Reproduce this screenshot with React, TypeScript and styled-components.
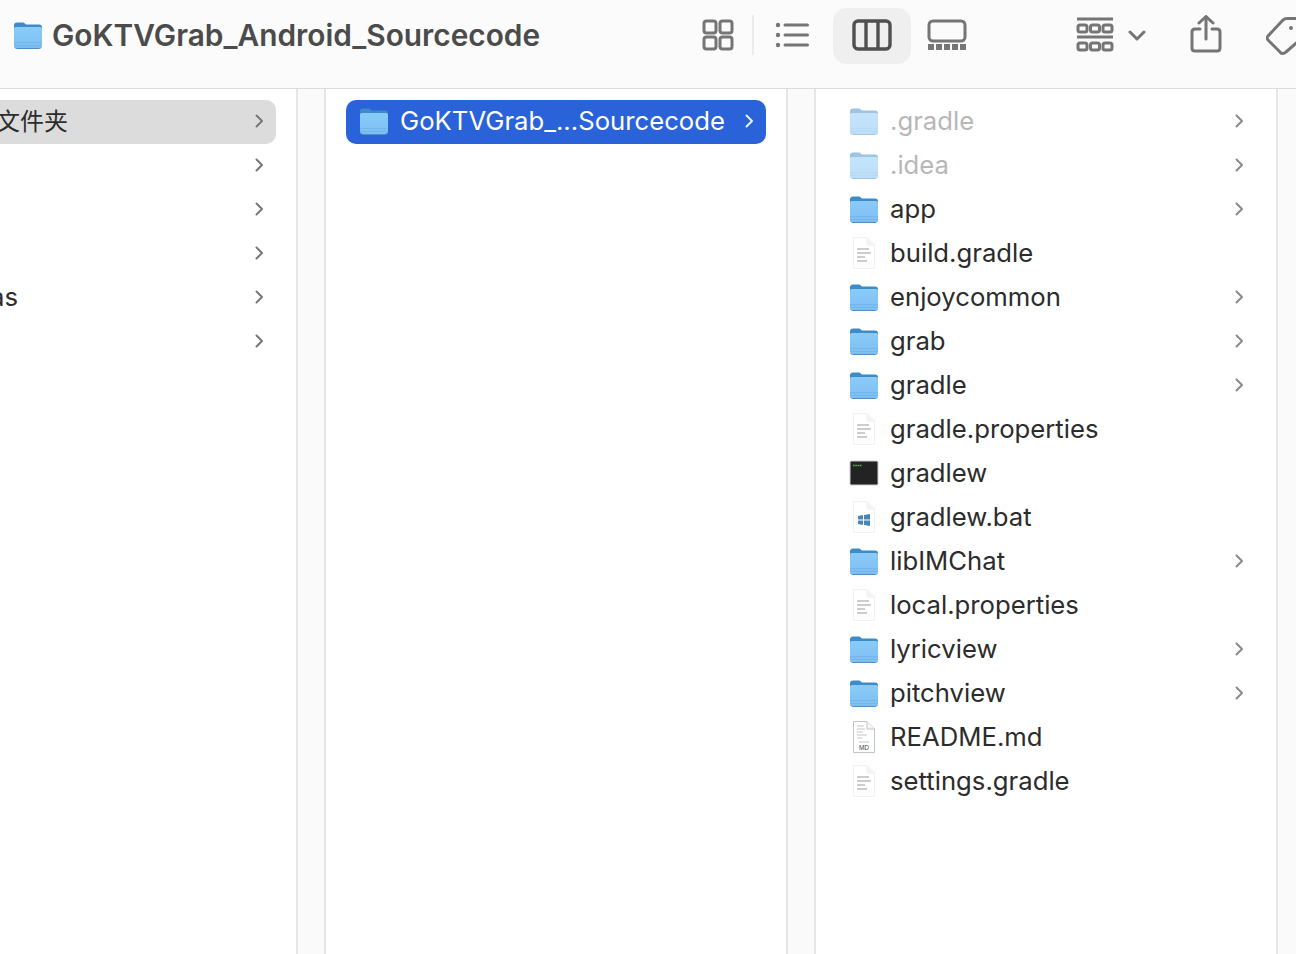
import React, { useId } from "react";
import styled, { createGlobalStyle } from "styled-components";

const Global = createGlobalStyle`
  html, body { margin: 0; padding: 0; height: 100%; overflow: hidden; background: #fff; }
  #root { height: 954px; overflow: hidden; }
  * { box-sizing: border-box; }
`;

const Window = styled.div`
  width: 1296px;
  height: 954px;
  display: flex;
  flex-direction: column;
  overflow: hidden;
  font-family: Inter, "Noto Sans CJK SC", "Liberation Sans", sans-serif;
`;

const Toolbar = styled.header`
  flex: 0 0 89px;
  height: 89px;
  display: flex;
  align-items: center;
  padding: 0 0 18px 13px;
  background: #fbfbfb;
  border-bottom: 1px solid #dcdcdc;
  overflow: hidden;
`;

const Title = styled.h1`
  margin: 0 0 0 9px;
  flex: 0 0 640px;
  font-size: 29.85px;
  font-weight: 600;
  color: #4b4b4b;
  white-space: nowrap;
`;

const ToolIcon = styled.svg<{ $left: number; $lift?: number }>`
  flex: none;
  display: block;
  margin-left: ${(p) => p.$left}px;
  margin-bottom: ${(p) => p.$lift ?? 0}px;
  fill: none;
  stroke: #757575;
  stroke-width: 3;
`;

const Divider = styled.span`
  flex: none;
  width: 2px;
  height: 40px;
  margin-left: 18px;
  background: #ececec;
`;

const ActivePill = styled.div`
  flex: none;
  width: 78px;
  height: 56px;
  margin-left: 24px;
  margin-top: 2px;
  border-radius: 14px;
  background: #efefef;
  display: flex;
  align-items: center;
  justify-content: center;
`;

const ColumnsGlyph = styled.svg`
  display: block;
  margin-bottom: 2px;
  fill: none;
  stroke: #505050;
  stroke-width: 3.4;
`;

const Browser = styled.main`
  flex: 1;
  display: flex;
  min-height: 0;
  background: #fff;
`;

const Column = styled.section<{ $width: number }>`
  flex: 0 0 ${(p) => p.$width}px;
  padding: 11px 20px 0;
  border-right: 2px solid #e6e6e6;
  background: #fff;
  overflow: hidden;
`;

const Gutter = styled.div<{ $last?: boolean }>`
  flex: ${(p) => (p.$last ? "1" : "0 0 28px")};
  background: #fafafa;
  border-right: ${(p) => (p.$last ? "0" : "2px solid #e6e6e6")};
`;

const Row = styled.div<{ $state?: "blue" | "grey" }>`
  height: 44px;
  display: flex;
  align-items: center;
  border-radius: 10px;
  background: ${(p) =>
    p.$state === "blue" ? "#2a62d9" : p.$state === "grey" ? "#dcdcdc" : "transparent"};
`;

const IconSlot = styled.span`
  flex: 0 0 54px;
  height: 44px;
  display: flex;
  align-items: center;
  padding: 0 0 2px 13px;
`;

const Label = styled.span<{ $tone?: "dim" | "white" }>`
  flex: 1;
  min-width: 0;
  padding-bottom: 3px;
  font-size: 25.7px;
  white-space: nowrap;
  color: ${(p) => (p.$tone === "dim" ? "#b7b7b7" : p.$tone === "white" ? "#ffffff" : "#2c2c2c")};
`;

const ClippedLabel = styled.span<{ $offset: number; $size: number; $lift: number }>`
  flex: 1;
  min-width: 0;
  margin-left: ${(p) => p.$offset}px;
  padding-bottom: ${(p) => p.$lift}px;
  font-size: ${(p) => p.$size}px;
  white-space: nowrap;
  color: #2c2c2c;
`;

const SidebarRows = styled.div`
  margin-left: -40px;
`;

const Chevron = styled.svg<{ $light?: boolean; $dark?: boolean }>`
  flex: none;
  display: block;
  margin: 0 12px 2px 0;
  fill: none;
  stroke: ${(p) => (p.$light ? "#e8efff" : p.$dark ? "#777777" : "#8a8a8a")};
  stroke-width: 2;
  stroke-linecap: round;
  stroke-linejoin: round;
`;

const FolderGlyph = styled.svg<{ $dim?: boolean }>`
  flex: none;
  display: block;
  opacity: ${(p) => (p.$dim ? 0.5 : 1)};
`;

const DocGlyph = styled.svg`
  flex: none;
  display: block;
`;

function Arrow(props: { light?: boolean; dark?: boolean }) {
  return (
    <Chevron $light={props.light} $dark={props.dark} width="10" height="16" viewBox="0 0 10 16">
      <path d="M2.5 2.5 L8 8 L2.5 13.5" />
    </Chevron>
  );
}

function Folder({ dim }: { dim?: boolean }) {
  const id = useId();
  return (
    <FolderGlyph $dim={dim} width="30" height="28" viewBox="0 0 30 28">
      <defs>
        <linearGradient id={id} x1="0" y1="0" x2="0" y2="1">
          <stop offset="0" stopColor="#8accf8" />
          <stop offset="1" stopColor="#7bbff2" />
        </linearGradient>
      </defs>
      <path d="M1 4.5 C1 2.5 2 1.5 4 1.5 H10 C11.5 1.5 12 3.5 13.5 3.5 H26 C28 3.5 29 4.5 29 6.5 V12 H1 Z" fill="#3f8ac9" />
      <path d="M1 8 C1 6.8 1.8 6 3 6 H27 C28.2 6 29 6.8 29 8 V24.5 C29 26 28 27 26.5 27 H3.5 C2 27 1 26 1 24.5 Z" fill={`url(#${id})`} />
      <rect x="1" y="21" width="28" height="1" fill="#6fb0e4" opacity="0.7" />
      <rect x="1" y="24" width="28" height="1" fill="#6fb0e4" opacity="0.6" />
      <path d="M1.5 26 C2 27 3 27.5 4 27.5 H26 C27 27.5 28 27 28.5 26" fill="none" stroke="#4f8fc8" strokeWidth="1" />
    </FolderGlyph>
  );
}

function DocShape({ children, stroke = "#e4e4e4" }: { children?: React.ReactNode; stroke?: string }) {
  return (
    <DocGlyph width="30" height="34" viewBox="0 0 30 34">
      <path d="M4.5 1.5 H18 L25.5 9 V32.5 H4.5 Z" fill="#ffffff" stroke={stroke} strokeWidth="1" />
      <path d="M18 1.5 V9 H25.5" fill="#f4f4f4" stroke={stroke} strokeWidth="1" />
      {children}
    </DocGlyph>
  );
}

function TextDoc() {
  return (
    <DocShape stroke="#f2f2f2">
      <g stroke="#bdbdbd" strokeWidth="1.5">
        <line x1="8" y1="13" x2="20" y2="13" />
        <line x1="8" y1="17" x2="22" y2="17" />
        <line x1="8" y1="21" x2="16" y2="21" />
        <line x1="8" y1="25" x2="18" y2="25" />
      </g>
    </DocShape>
  );
}

function WindowsDoc() {
  return (
    <DocShape stroke="#f2f2f2">
      <path transform="translate(0 -1.5)" d="M9 17.5 L14 16.6 V21 H9 Z M15 16.4 L21 15.4 V21 H15 Z M9 22 H14 V26.4 L9 25.5 Z M15 22 H21 V27.6 L15 26.6 Z" fill="#4a86b4" />
    </DocShape>
  );
}

function MdDoc() {
  return (
    <DocShape stroke="#c4c4c4">
      <g stroke="#c4c4c4" strokeWidth="1">
        <line x1="8" y1="6" x2="15" y2="6" />
        <line x1="8" y1="9" x2="16" y2="9" />
        <line x1="8" y1="12" x2="14" y2="12" />
        <line x1="8" y1="15" x2="18" y2="15" />
        <line x1="8" y1="18" x2="13" y2="18" />
        <line x1="10" y1="22" x2="20" y2="22" />
      </g>
      <text x="15" y="30" textAnchor="middle" fontSize="6.5" fontFamily="Liberation Sans, sans-serif" fill="#444">MD</text>
    </DocShape>
  );
}

function Terminal() {
  return (
    <DocGlyph width="30" height="26" viewBox="0 0 30 26">
      <rect x="1" y="1" width="28" height="24" rx="1.5" fill="#232323" stroke="#cfcfcf" strokeWidth="1" />
      <path d="M4 5.5 H13" stroke="#5fb064" strokeWidth="1.6" strokeDasharray="1.6 0.7" />
    </DocGlyph>
  );
}

type Kind = "folder" | "dim" | "text" | "term" | "win" | "md";
const files: { name: string; kind: Kind }[] = [
  { name: ".gradle", kind: "dim" },
  { name: ".idea", kind: "dim" },
  { name: "app", kind: "folder" },
  { name: "build.gradle", kind: "text" },
  { name: "enjoycommon", kind: "folder" },
  { name: "grab", kind: "folder" },
  { name: "gradle", kind: "folder" },
  { name: "gradle.properties", kind: "text" },
  { name: "gradlew", kind: "term" },
  { name: "gradlew.bat", kind: "win" },
  { name: "libIMChat", kind: "folder" },
  { name: "local.properties", kind: "text" },
  { name: "lyricview", kind: "folder" },
  { name: "pitchview", kind: "folder" },
  { name: "README.md", kind: "md" },
  { name: "settings.gradle", kind: "text" },
];

function FileIcon({ kind }: { kind: Kind }) {
  if (kind === "folder") return <Folder />;
  if (kind === "dim") return <Folder dim />;
  if (kind === "term") return <Terminal />;
  if (kind === "win") return <WindowsDoc />;
  if (kind === "md") return <MdDoc />;
  return <TextDoc />;
}

export default function App() {
  return (
    <Window>
      <Global />
      <Toolbar>
        <Folder />
        <Title>GoKTVGrab_Android_Sourcecode</Title>
        <ToolIcon $left={10} width="32" height="32" viewBox="0 0 32 32" strokeWidth="2.6">
          <rect x="2" y="2" width="12" height="12" rx="2.5" />
          <rect x="18" y="2" width="12" height="12" rx="2.5" />
          <rect x="2" y="18" width="12" height="12" rx="2.5" />
          <rect x="18" y="18" width="12" height="12" rx="2.5" />
        </ToolIcon>
        <Divider />
        <ToolIcon $left={21} width="34" height="26" viewBox="0 0 34 26">
          <circle cx="3" cy="3" r="2.2" fill="#757575" stroke="none" />
          <circle cx="3" cy="13" r="2.2" fill="#757575" stroke="none" />
          <circle cx="3" cy="23" r="2.2" fill="#757575" stroke="none" />
          <line x1="10" y1="3" x2="32.5" y2="3" strokeLinecap="round" />
          <line x1="10" y1="13" x2="32.5" y2="13" strokeLinecap="round" />
          <line x1="10" y1="23" x2="32.5" y2="23" strokeLinecap="round" />
        </ToolIcon>
        <ActivePill>
          <ColumnsGlyph width="40" height="32" viewBox="0 0 40 32">
            <rect x="2" y="2" width="36" height="28" rx="4" />
            <line x1="14" y1="2" x2="14" y2="30" />
            <line x1="26" y1="2" x2="26" y2="30" />
          </ColumnsGlyph>
        </ActivePill>
        <ToolIcon $left={16} width="40" height="32" viewBox="0 0 40 32">
          <rect x="2" y="2" width="36" height="20" rx="4" />
          <g fill="#757575" stroke="none">
            <rect x="1" y="25" width="6" height="6" />
            <rect x="9" y="25" width="6" height="6" />
            <rect x="17" y="25" width="6" height="6" />
            <rect x="25" y="25" width="6" height="6" />
            <rect x="33" y="25" width="6" height="6" />
          </g>
        </ToolIcon>
        <ToolIcon $left={109} $lift={1} width="38" height="36" viewBox="0 0 38 36">
          <line x1="1" y1="2" x2="37" y2="2" />
          <rect x="2" y="8" width="9" height="7" rx="2" />
          <rect x="14.5" y="8" width="9" height="7" rx="2" />
          <rect x="27" y="8" width="9" height="7" rx="2" />
          <line x1="1" y1="20" x2="37" y2="20" />
          <rect x="2" y="26" width="9" height="7" rx="2" />
          <rect x="14.5" y="26" width="9" height="7" rx="2" />
          <rect x="27" y="26" width="9" height="7" rx="2" />
        </ToolIcon>
        <ToolIcon $left={14} $lift={-2} width="18" height="12" viewBox="0 0 18 12" strokeLinecap="round" strokeLinejoin="round" strokeWidth="3.2">
          <path d="M2 2 L9 9 L16 2" />
        </ToolIcon>
        <ToolIcon $left={44} $lift={3} width="32" height="38" viewBox="0 0 32 38" strokeLinejoin="round" strokeLinecap="round" strokeWidth="2.8">
          <path d="M10 14 H5 C3 14 2 15 2 17 V33 C2 35 3 36 5 36 H27 C29 36 30 35 30 33 V17 C30 15 29 14 27 14 H22" />
          <line x1="16" y1="2" x2="16" y2="24" />
          <path d="M9 8 L16 1.5 L23 8" />
        </ToolIcon>
        <ToolIcon $left={44} $lift={-2} width="40" height="40" viewBox="0 0 40 40" strokeLinejoin="round" strokeWidth="2.8">
          <path d="M2 20 L17 4 C18 3 19 2.5 21 2.5 H34 C37 2.5 38 4 38 6 V18 C38 20 37 21 36 22 L20 36 C18 38 15 38 14 36 L2 24 C1 23 1 21 2 20 Z" />
          <circle cx="25" cy="12" r="2" fill="#757575" stroke="none" />
        </ToolIcon>
      </Toolbar>
      <Browser>
        <Column $width={298}>
          <SidebarRows>
            <Row $state="grey">
              <ClippedLabel $offset={16} $size={24} $lift={6}>文件夹</ClippedLabel>
              <Arrow dark />
            </Row>
            <Row><ClippedLabel $offset={0} $size={25.7} $lift={3} /><Arrow dark /></Row>
            <Row><ClippedLabel $offset={0} $size={25.7} $lift={3} /><Arrow dark /></Row>
            <Row><ClippedLabel $offset={0} $size={25.7} $lift={3} /><Arrow dark /></Row>
            <Row><ClippedLabel $offset={10} $size={25.7} $lift={3}>as</ClippedLabel><Arrow dark /></Row>
            <Row><ClippedLabel $offset={0} $size={25.7} $lift={3} /><Arrow dark /></Row>
          </SidebarRows>
        </Column>
        <Gutter />
        <Column $width={462}>
          <Row $state="blue">
            <IconSlot><Folder /></IconSlot>
            <Label $tone="white">GoKTVGrab_...Sourcecode</Label>
            <Arrow light />
          </Row>
        </Column>
        <Gutter />
        <Column $width={462}>
          {files.map((f) => (
            <Row key={f.name}>
              <IconSlot><FileIcon kind={f.kind} /></IconSlot>
              <Label $tone={f.kind === "dim" ? "dim" : undefined}>{f.name}</Label>
              {f.kind === "folder" || f.kind === "dim" ? <Arrow /> : null}
            </Row>
          ))}
        </Column>
        <Gutter $last />
      </Browser>
    </Window>
  );
}
